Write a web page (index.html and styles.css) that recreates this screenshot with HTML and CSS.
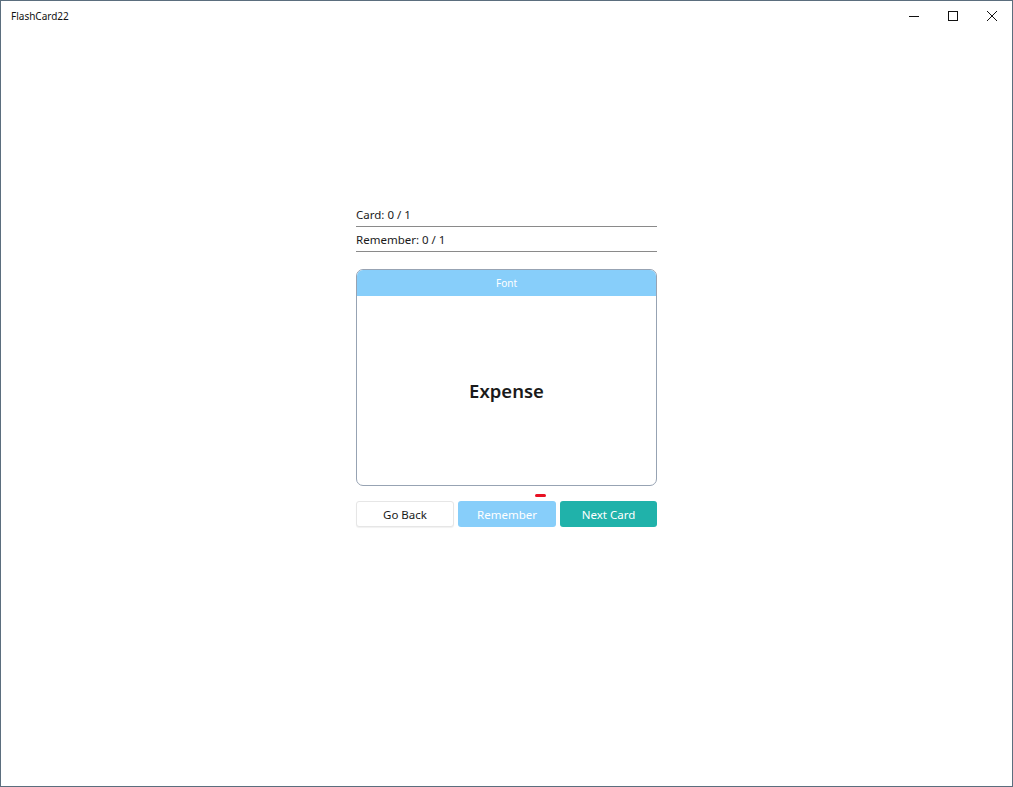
FILE: index.html
```html
<!DOCTYPE html>
<html>
<head>
<meta charset="utf-8">
<link rel="stylesheet" href="styles.css">
</head>
<body>
<div class="window">
  <div class="titlebar">
    <span class="title">FlashCard22</span>
    <div class="controls">
      <span class="ctl"><svg width="12" height="12" viewBox="0 0 12 12"><path d="M1 6.5h10" stroke="#111" stroke-width="1" fill="none"/></svg></span>
      <span class="ctl"><svg width="12" height="12" viewBox="0 0 12 12"><rect x="1.5" y="1.5" width="9" height="9" stroke="#111" stroke-width="1" fill="none"/></svg></span>
      <span class="ctl"><svg width="12" height="12" viewBox="0 0 12 12"><path d="M1 1l10 10M11 1L1 11" stroke="#111" stroke-width="1" fill="none"/></svg></span>
    </div>
  </div>
  <main class="content">
    <div class="panel">
      <div class="stat">Card: 0 / 1</div>
      <div class="stat">Remember: 0 / 1</div>
      <div class="card">
        <div class="card-head">Font</div>
        <div class="card-body">Expense</div>
      </div>
      <div class="actions">
        <span class="marker"></span>
        <button class="btn btn-back">Go Back</button>
        <button class="btn btn-remember">Remember</button>
        <button class="btn btn-next">Next Card</button>
      </div>
    </div>
  </main>
</div>
</body>
</html>
```
FILE: styles.css
```css
* { box-sizing: border-box; }
html, body { margin: 0; padding: 0; background: #fff; }
body { font-family: "Noto Sans", "Open Sans", sans-serif; color: #1a1a1a; }
.window {
  width: 1013px;
  height: 787px;
  border: 1px solid #5b6e7e;
  display: flex;
  flex-direction: column;
  background: #fff;
}
.titlebar {
  height: 29px;
  display: flex;
  align-items: center;
  justify-content: space-between;
}
.title { font-size: 10px; padding-left: 10px; color: #111; }
.controls { display: flex; height: 100%; }
.ctl {
  width: 38.5px;
  display: flex;
  align-items: center;
  justify-content: center;
}
.controls .ctl:last-child { width: 40px; }
.content {
  flex: 1;
  display: flex;
  justify-content: center;
  padding-top: 172px;
}
.panel { width: 301px; display: flex; flex-direction: column; }
.stat {
  height: 25px;
  font-size: 11.5px;
  line-height: 26px;
  border-bottom: 1px solid #8a8a8a;
  color: #1a1a1a;
}
.card {
  margin-top: 17px;
  height: 217px;
  border: 1px solid #97a3b3;
  border-radius: 7px;
  overflow: hidden;
  display: flex;
  flex-direction: column;
}
.card-head {
  height: 26px;
  background: #87cefa;
  color: #fff;
  font-size: 10px;
  display: flex;
  align-items: center;
  justify-content: center;
}
.card-body {
  flex: 1;
  display: flex;
  align-items: center;
  justify-content: center;
  font-size: 18.5px;
  font-weight: 600;
  color: #1a1a1a;
}
.actions {
  position: relative;
  margin-top: 15px;
  display: grid;
  grid-template-columns: 98px 98px 97px;
  gap: 4px;
}
.marker {
  position: absolute;
  left: 179px;
  top: -7px;
  width: 11px;
  height: 3px;
  border-radius: 2px;
  background: #e81123;
}
.btn {
  height: 26px;
  border-radius: 3px;
  font-family: inherit;
  font-size: 11.5px;
  padding: 0;
  border: 1px solid transparent;
}
.btn-back { background: #fff; color: #1a1a1a; border-color: #e6e6e6; box-shadow: 0 1px 1px rgba(0,0,0,0.06); }
.btn-remember { background: #87cefa; color: #fff; }
.btn-next { background: #20b2aa; color: #fff; }
```
